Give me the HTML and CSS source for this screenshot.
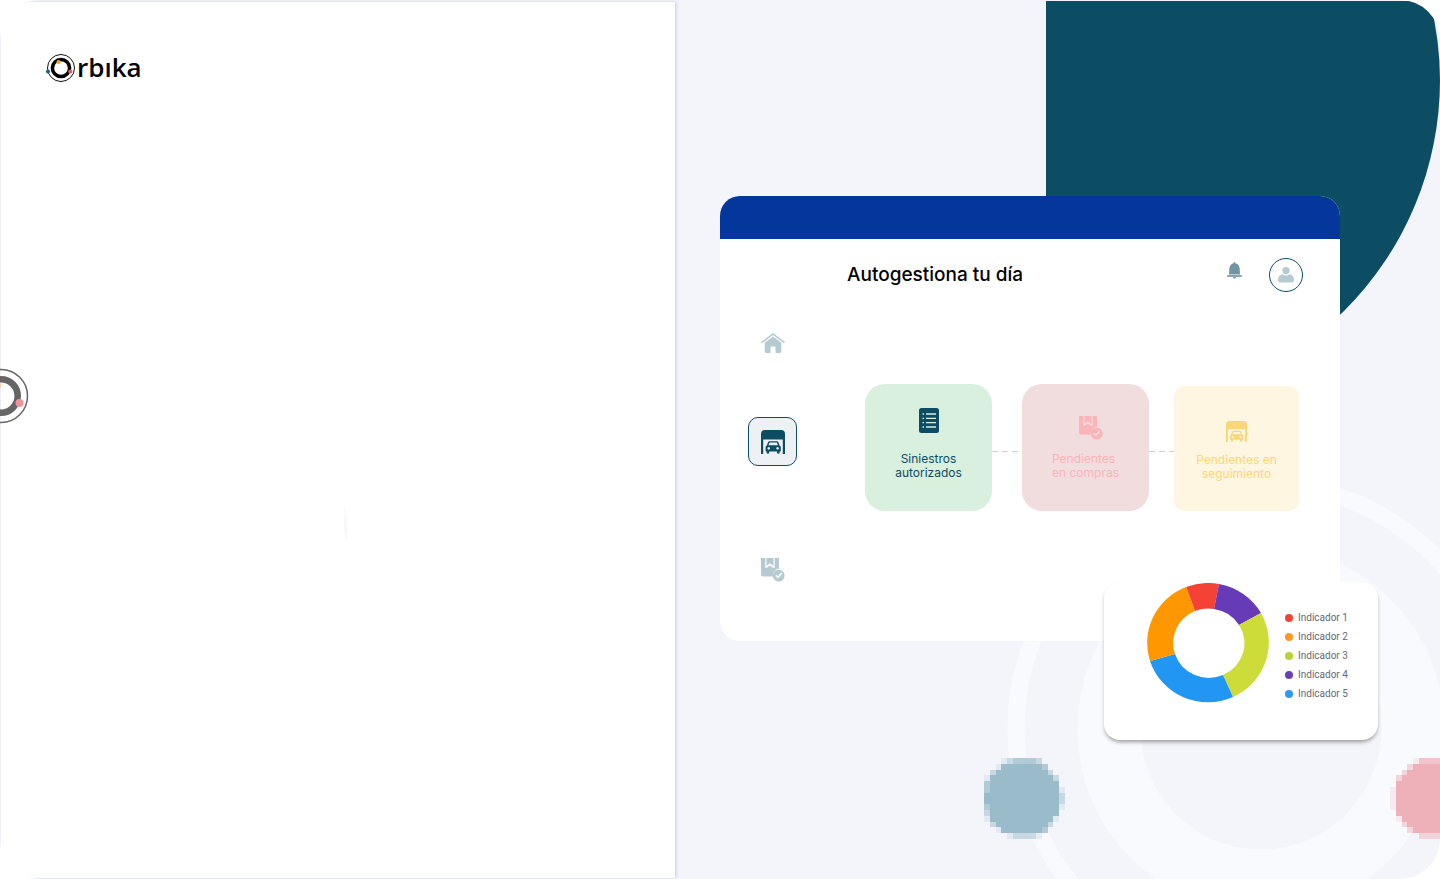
FILE: index.html
```html
<!DOCTYPE html>
<html lang="es">
<head>
<meta charset="utf-8">
<meta name="viewport" content="width=device-width, initial-scale=1">
<title>Orbika</title>
<link rel="stylesheet" href="styles.css">
</head>
<body>
<svg class="defs" aria-hidden="true">
  <symbol id="i-garage" viewBox="0 0 24 24">
    <path d="M0 24V4a4 4 0 0 1 4-4h16a4 4 0 0 1 4 4v20h-2.2V9.500H2.200V24z"/>
    <path fill-rule="evenodd" d="M8.300 11.200h7.600q1.100 0 1.500 1l1.200 3.200q1.200.4 1.200 1.800v3.600q0 .7-.8.7h-.4v1.200q0 1-1.300 1t-1.300-1v-1.200H8.200v1.200q0 1-1.300 1t-1.300-1v-1.200h-.200q-.8 0-.8-.7v-3.600q0-1.400 1.200-1.800l1.200-3.200q.4-1 1.300-1zM8.500 12.500l-1 2.700h9.400l-1-2.700zM7.700 17a1.300 1.300 0 1 0 .01 0zM16.600 17a1.300 1.300 0 1 0 .01 0z"/>
  </symbol>
  <symbol id="i-box" viewBox="0 0 24 24">
    <path d="M0 0h4.300v9.800h1.600l3-2.400 3 2.400h1.800V0H18v10.500a7.300 7.300 0 0 0-6.200 8H2a2 2 0 0 1-2-2z"/>
    <path d="M5.500 0h7v8L8.900 5.200 5.500 8z"/>
    <path fill-rule="evenodd" d="M17.700 11.700a5.900 5.900 0 1 0 .01 0zM20.300 14.600l1.100 1-4.400 4.800-2.700-2.500 1-1.100 1.600 1.400z"/>
  </symbol>
  <symbol id="dot" viewBox="0 0 14 14" shape-rendering="crispEdges">
    <path d="M3 1h7v1h1v1h1v1h1v6h-1v1h-1v1h-1v1H3v-1H2v-1H1V3h1V2h1z"/>
    <path opacity=".75" d="M5 0h4v1H5zM0 4h1v2H0zM0 8h1v1H0zM10 1h1v1h-1zM10 12h1v1h-1z"/>
    <path d="M0 6h1v2H0z"/>
    <path opacity=".5" d="M4 0h1v1H4zM9 0h1v1H9zM5 13h4v1H5zM13 6h1v2h-1zM0 9h1v1H0zM1 2h1v1H1zM11 2h1v1h-1zM12 3h1v1h-1zM1 11h1v1H1zM11 11h1v1h-1z"/>
    <path opacity=".2" d="M3 0h1v1H3zM2 1h1v1H2zM0 3h1v1H0zM0 10h1v1H0zM2 12h1v1H2zM4 13h1v1H4zM9 13h1v1H9zM13 5h1v1h-1zM13 8h1v1h-1zM12 10h1v1h-1z"/>
  </symbol>
  <symbol id="dot-soft" viewBox="0 0 14 14" shape-rendering="crispEdges">
    <path d="M4 1h7v1h1v1h1v8h-1v1h-1v1H4v-1H3v-1H2v-1H1V4h1V3h1V2h1z"/>
    <path opacity=".75" d="M5 0h5v1H5zM1 4h1v1H1zM1 9h1v1H1z"/>
    <path opacity=".5" d="M5 13h5v1H5zM3 1h1v1H3zM2 2h1v1H2zM1 3h1v1H1zM2 11h1v1H2zM3 12h1v1H3z"/>
    <path opacity=".2" d="M4 0h1v1H4zM0 5h1v4H0zM1 10h1v1H1z"/>
  </symbol>
</svg>
<main class="shell">
  <section class="intro">
    <a class="logo" href="#" aria-label="Orbika">
      <svg class="logo-mark" viewBox="0 0 32 30" aria-hidden="true">
        <circle cx="16" cy="15" r="13.500" fill="none" stroke="#111" stroke-width="1"/>
        <circle cx="16" cy="15" r="8.600" fill="none" stroke="#000" stroke-width="3.500"/>
        <circle cx="13.500" cy="9" r="2.100" fill="#f5a623"/>
        <circle cx="25.300" cy="18.500" r="2.100" fill="#f2555f"/>
        <circle cx="3" cy="18.500" r="2.100" fill="#17698a"/>
      </svg>
      <span class="logo-text">rbıka</span>
    </a>
    <svg class="orbit" viewBox="0 0 30 56" aria-hidden="true">
      <circle cx="1" cy="28" r="26.500" fill="none" stroke="#666" stroke-width="1.500"/>
      <circle cx="1" cy="28" r="16.700" fill="none" stroke="#666" stroke-width="6.600"/>
      <circle cx="19.500" cy="35" r="4" fill="#f1929a"/>
      <circle cx="-3" cy="17" r="4" fill="#fbc9a0"/>
    </svg>
    <svg class="trace" viewBox="0 0 4 34" aria-hidden="true"><path d="M0 0h1v9l2 2v23h-1l-2-14z" fill="#f7f7ff"/></svg>
  </section>

  <section class="showcase">
    <svg class="corner" viewBox="0 0 394 420" aria-hidden="true"><path d="M0 1H384A326 326 0 0 1 394 80A326 326 0 0 1 68 406H0z" fill="#0d4d63"/></svg>
    <svg class="rings" viewBox="0 0 508 508" aria-hidden="true" fill="none" stroke="#f9fafe">
      <circle cx="254" cy="254" r="245" stroke-width="17"/>
      <circle cx="254" cy="254" r="152" stroke-width="63"/>
    </svg>
    <svg class="dot dot-blue" aria-hidden="true"><use href="#dot"/></svg>
    <svg class="dot dot-pink" aria-hidden="true"><use href="#dot-soft"/></svg>

    <article class="window">
      <div class="window-bar"></div>
      <div class="window-body">
        <nav class="side" aria-label="Secciones">
          <button class="side-btn" type="button" aria-label="Inicio">
            <svg class="icon-home" viewBox="0 0 24 20" aria-hidden="true">
              <path d="M12 0L24 9l-1 1.300L12 2 1 10.300 0 9z"/>
              <path d="M12 3.400l8.300 6.300V18.500q0 1.500-1.500 1.500H14.500v-6.500h-5V20H5.200q-1.500 0-1.500-1.500V9.700z"/>
            </svg>
          </button>
          <button class="side-btn is-active" type="button" aria-label="Taller"><svg class="icon" aria-hidden="true"><use href="#i-garage"/></svg></button>
          <button class="side-btn side-last" type="button" aria-label="Compras"><svg class="icon" aria-hidden="true"><use href="#i-box"/></svg></button>
        </nav>
        <div class="content">
          <header class="top">
            <h1 class="title">Autogestiona tu día</h1>
            <button class="bell" type="button" aria-label="Notificaciones">
              <svg viewBox="0 0 15 17" aria-hidden="true"><path d="M7.500 0q.8 0 .9 1.200Q12.500 2.500 12.700 7l.3 5.500H2L2.300 7Q2.500 2.500 6.600 1.200 6.700 0 7.500 0z" fill="#6f95a3"/><path d="M.8 13h13.400q.8 0 .8 1t-.8 1H9.300q-.3 1.700-1.800 1.700T5.700 15H.8Q0 15 0 14t.8-1z" fill="#86a7b2"/></svg>
            </button>
            <button class="avatar" type="button" aria-label="Perfil">
              <svg viewBox="0 0 16 16" aria-hidden="true"><circle cx="8" cy="3.600" r="3.600"/><path d="M4.500 7.300Q8 9.800 11.500 7.300 16 8.300 16 13q0 2.500-2 2.500H2q-2 0-2-2.500 0-4.700 4.500-5.700z"/></svg>
            </button>
          </header>
          <div class="flow">
            <div class="step step-green">
              <svg class="icon-list" viewBox="0 0 20 25" aria-hidden="true"><rect width="20" height="25" rx="2.500"/><path d="M3.500 6h1.500M7 6h10M3.500 10.400h1.500M7 10.400h10M3.500 14.700h1.500M7 14.700h10M3.500 19h1.500M7 19h10" stroke="#d9f0df" stroke-width="1.300"/></svg>
              <p class="label">Siniestros<br>autorizados</p>
            </div>
            <span class="link"></span>
            <div class="step step-pink">
              <svg class="icon" aria-hidden="true"><use href="#i-box"/></svg>
              <p class="label">Pendientes<br>en compras</p>
            </div>
            <span class="link link-short"></span>
            <div class="step step-yellow">
              <svg class="icon" aria-hidden="true"><use href="#i-garage"/></svg>
              <p class="label">Pendientes en<br>seguimiento</p>
            </div>
          </div>
        </div>
      </div>

      <aside class="chart">
        <svg class="donut" viewBox="0 0 122 120" role="img" aria-label="Indicadores">
          <path fill="#f44336" d="M39 4A61 60 0 0 1 72 1L67 26A35.500 34.500 0 0 0 48 28z"/>
          <path fill="#673ab7" d="M72 1A61 60 0 0 1 114 30L92 42A35.500 34.500 0 0 0 67 26z"/>
          <path fill="#cddc39" d="M114 30A61 60 0 0 1 86 114L76 92A35.500 34.500 0 0 0 92 42z"/>
          <path fill="#2196f3" d="M86 114A61 60 0 0 1 3 78L28 71A35.500 34.500 0 0 0 76 92z"/>
          <path fill="#ff9800" d="M3 78A61 60 0 0 1 39 4L48 28A35.500 34.500 0 0 0 28 71z"/>
        </svg>
        <ul class="legend">
          <li class="key key-red">Indicador 1</li>
          <li class="key key-orange">Indicador 2</li>
          <li class="key key-lime">Indicador 3</li>
          <li class="key key-purple">Indicador 4</li>
          <li class="key key-blue">Indicador 5</li>
        </ul>
      </aside>
    </article>
  </section>
</main>
</body>
</html>
```
FILE: styles.css
```css
* { box-sizing: border-box; }
body { margin: 0; background: #fff; font-family: Roboto, "Open Sans", sans-serif; }
button { margin: 0; padding: 0; border: 0; background: none; cursor: pointer; }
svg { display: block; }
.defs { position: absolute; width: 0; height: 0; }

.shell { display: grid; grid-template-columns: 675fr 765fr; min-height: 100vh; background: #f4f5fb; border-radius: 40px; overflow: hidden; }

.intro { position: relative; z-index: 1; margin: 2px 0 1px 1px; padding: 51px 44px; background: #fff; box-shadow: 1px 0 3px #c6cbd9; }
.logo { display: inline-flex; align-items: flex-start; color: #000; text-decoration: none; }
.logo-mark { width: 32px; height: 30px; }
.logo-text { font: 600 26px/28px "Open Sans", sans-serif; }
.orbit { position: absolute; left: -1px; top: 366px; width: 30px; height: 56px; }
.trace { position: absolute; left: 343px; top: 505px; width: 4px; height: 34px; }

.showcase { position: relative; padding: 196px 100px 238px 45px; overflow: hidden; }
.corner { position: absolute; right: 0; top: 0; width: 394px; height: 420px; }
.rings { position: absolute; right: -75px; top: 475px; width: 508px; height: 508px; }
.dot { position: absolute; top: 758px; width: 81px; height: 81px; }
.dot-blue { right: 375px; fill: #9abbca; }
.dot-pink { right: -31px; fill: #eeb1b9; }

.window { position: relative; min-height: 445px; background: #fff; border-radius: 20px; }
.window-bar { height: 43px; background: #05369b; border-radius: 20px 20px 0 0; }
.window-body { display: grid; grid-template-columns: 127px 1fr; }

.side { display: flex; flex-direction: column; gap: 50px; padding: 79px 0 0 28px; }
.side-btn { display: grid; place-items: center; width: 49px; height: 49px; fill: #b5cad1; }
.side-last { margin-top: 29px; }
.is-active { background: #eef1f3; border: 1px solid #0d4d63; border-radius: 10px; fill: #0d4d63; }
.icon { width: 24px; height: 24px; }
.icon-home { width: 24px; height: 20px; }

.top { display: flex; align-items: center; padding: 19px 37px 0 0; }
.title { flex: 1; margin: 0; color: #000; font: 500 19px/34px Inter, sans-serif; }
.bell { display: flex; align-items: flex-start; width: 15px; height: 26px; margin-right: 27px; }
.bell svg { width: 15px; height: 17px; }
.avatar { display: grid; place-items: center; width: 34px; height: 34px; border: 1px solid #0d4d63; border-radius: 50%; fill: #b5cad1; }
.avatar svg { width: 16px; height: 16px; }

.flow { display: flex; align-items: flex-end; padding: 92px 41px 0 18px; }
.step { display: flex; flex: 127; flex-direction: column; justify-content: flex-end; align-items: center; height: 127px; padding-bottom: 31px; border-radius: 20px; }
.label { margin: 0; font-family: Inter, sans-serif; font-size: 12px; line-height: 14px; text-align: center; }
.step-green { gap: 19px; background: #d9f0df; color: #0d4d63; }
.icon-list { width: 20px; height: 25px; fill: #0d4d63; }
.step-pink { gap: 12px; background: #f1dcde; color: #fbb4b8; }
.step-pink .icon { fill: #fbb4b8; margin-left: 10px; }
.step-pink .label { text-align: left; }
.step-yellow { flex: 125; gap: 11px; height: 125px; padding-bottom: 30px; background: #fff6e2; border-radius: 10px; color: #fad776; }
.step-yellow .icon { width: 21px; height: 21px; fill: #fad776; }
.link { width: 30px; height: 60px; background: repeating-linear-gradient(90deg, #d0d0d0 0 6px, transparent 6px 10px) top / 100% 1px no-repeat; }
.link-short { width: 25px; }

.chart { position: absolute; right: -38px; bottom: -99px; display: flex; gap: 16px; width: 274px; padding: 1px 24px 37px 43px; background: #fff; border-radius: 16px; box-shadow: 0 3px 4px -1px rgba(0, 0, 0, .38); }
.donut { flex: none; width: 122px; height: 120px; }
.legend { margin: 0; padding: 25px 0 0; list-style: none; }
.key { display: flex; align-items: center; gap: 5px; color: #666876; font-size: 10px; font-weight: 400; line-height: 19px; white-space: nowrap; }
.key::before { content: ""; width: 8px; height: 8px; border-radius: 50%; background: #f44336; }
.key-orange::before { background: #ff9625; }
.key-lime::before { background: #b8d433; }
.key-purple::before { background: #6a41b5; }
.key-blue::before { background: #2f99f3; }
```
